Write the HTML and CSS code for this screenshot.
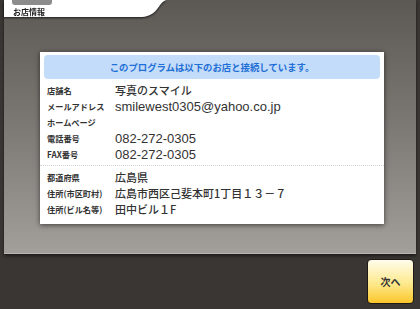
FILE: index.html
```html
<!DOCTYPE html>
<html>
<head>
  <title>お店情報</title>
  <link rel="stylesheet" href="styles.css">
</head>
<body>
  <div class="screen">
    <section class="panel">
      <div class="tab-wrap">
        <div class="tab">
          <span class="tab-pill">SHOP INFO</span>
          <span class="tab-title">お店情報</span>
        </div>
      </div>

      <div class="card">
        <div class="banner">このプログラムは以下のお店と接続しています。</div>
        <div class="rows">
          <div class="row">
            <span class="label">店舗名</span>
            <span class="value ja">写真のスマイル</span>
          </div>
          <div class="row">
            <span class="label">メールアドレス</span>
            <span class="value">smilewest0305@yahoo.co.jp</span>
          </div>
          <div class="row">
            <span class="label">ホームページ</span>
            <span class="value"></span>
          </div>
          <div class="row">
            <span class="label">電話番号</span>
            <span class="value">082-272-0305</span>
          </div>
          <div class="row">
            <span class="label">FAX番号</span>
            <span class="value">082-272-0305</span>
          </div>
        </div>
        <div class="sep"></div>
        <div class="rows">
          <div class="row">
            <span class="label">都道府県</span>
            <span class="value ja">広島県</span>
          </div>
          <div class="row">
            <span class="label">住所(市区町村)</span>
            <span class="value ja">広島市西区己斐本町1丁目１３－７</span>
          </div>
          <div class="row">
            <span class="label">住所(ビル名等)</span>
            <span class="value ja">田中ビル１F</span>
          </div>
        </div>
      </div>
    </section>

    <footer class="bottom">
      <button class="next">次へ</button>
    </footer>
  </div>
</body>
</html>
```

FILE: styles.css
```css
body {
  margin: 0;
  background-color: #3a3633;
  font-family: "Noto Sans CJK JP", "Liberation Sans", sans-serif;
  color: #333;
}
.screen {
  width: 420px;
  height: 309px;
  display: flex;
  flex-direction: column;
  overflow: hidden;
}
.panel {
  height: 253px;
  margin: 0 4px;
  background: linear-gradient(#5c5854, #7c7874 50%, #a29e9a);
  border-bottom: 1px solid #b8b4b0;
  box-shadow: 0 2px 3px rgba(0, 0, 0, 0.5);
}
.tab-wrap {
  filter: drop-shadow(0 1px 1px rgba(0, 0, 0, 0.7));
}
.tab {
  width: 162px;
  height: 17px;
  background-color: #fff;
  clip-path: path('M0 0 H162 C154 3 154 16 138 17 H0 Z');
  position: relative;
}
.tab-pill {
  position: absolute;
  left: 8px;
  top: -6px;
  width: 40px;
  height: 11px;
  border-radius: 3px;
  background-color: #8c8c8c;
  color: #ddd;
  font-size: 5px;
  line-height: 7px;
  text-align: center;
}
.tab-title {
  position: absolute;
  left: 9px;
  top: 6px;
  font-size: 8px;
  line-height: 11px;
  font-weight: bold;
  color: #222;
}
.card {
  margin: 35px 0 0 36px;
  width: 344px;
  height: 172px;
  box-sizing: border-box;
  padding: 3px 4px;
  background-color: #fff;
  box-shadow: 0 1px 5px rgba(0, 0, 0, 0.6);
}
.banner {
  height: 24px;
  line-height: 24px;
  border-radius: 4px;
  background-color: #c3dcfa;
  color: #1f6fd6;
  font-size: 9.4px;
  font-weight: bold;
  text-align: center;
}
.rows {
  padding: 3px 0 0 3px;
}
.row {
  display: flex;
  align-items: center;
  height: 16px;
}
.label {
  width: 68px;
  flex: none;
  font-size: 8.2px;
  font-weight: bold;
  color: #333;
}
.value {
  font-family: "Liberation Sans", "Noto Sans CJK JP", sans-serif;
  font-size: 13px;
  color: #333;
}
.value.ja {
  font-family: "Noto Sans CJK JP", sans-serif;
  font-size: 11px;
  font-weight: 500;
}
.sep {
  margin: 3px -4px 0;
  border-top: 1px dotted #d4d4d4;
}
.bottom {
  flex: 1;
  display: flex;
  justify-content: flex-end;
  align-items: flex-start;
  padding: 5px 6px 0 0;
}
.next {
  width: 47px;
  height: 45px;
  border: 1px solid #1e1a18;
  border-radius: 4px;
  background: linear-gradient(#fffcec, #fde98c 55%, #fbc62a);
  font-family: "Noto Sans CJK JP", sans-serif;
  font-size: 10px;
  font-weight: bold;
  color: #333;
  padding: 0;
}
```
